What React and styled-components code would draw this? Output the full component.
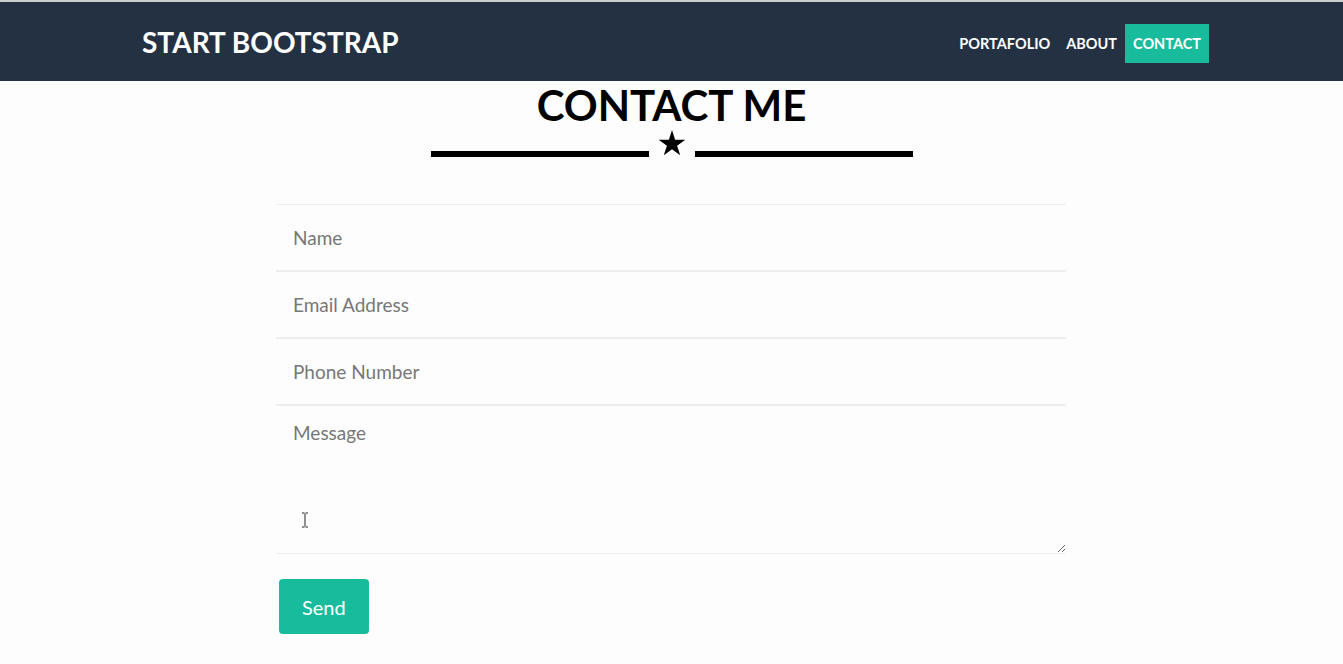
import * as React from "react";
import styled, { createGlobalStyle } from "styled-components";

const GlobalStyle = createGlobalStyle`
  html, body {
    margin: 0;
    padding: 0;
    background: #fdfdfd;
    font-family: Lato, "Liberation Sans", sans-serif;
  }
  * { box-sizing: border-box; }
`;

const Page = styled.div`
  border-top: 2px solid #cdcdcd;
  min-height: 664px;
`;

const NavBar = styled.nav`
  height: 79px;
  background-color: #243142;
  display: flex;
  align-items: center;
  justify-content: space-between;
  padding: 0 134px 0 142px;
`;

const Brand = styled.a`
  color: #fff;
  font-weight: 700;
  font-size: 28px;
  line-height: 1;
  text-decoration: none;
`;

const NavLinks = styled.ul`
  display: flex;
  list-style: none;
  margin: 0;
  padding: 0;
  margin-top: 3px;
`;

const NavLink = styled.li`
  height: 39px;
  display: flex;
  align-items: center;
  padding: 0 8px;
  color: #fff;
  font-weight: 700;
  font-size: 14.5px;
  background-color: ${({ $active }) => ($active ? "#18bc9c" : "transparent")};
`;

const Section = styled.section`
  display: flex;
  flex-direction: column;
  align-items: center;
`;

const Title = styled.h2`
  margin: 3px 0 0;
  font-size: 42px;
  line-height: 1;
  font-weight: 700;
  color: #000;
`;

const Divider = styled.div`
  display: flex;
  align-items: flex-end;
  margin-top: 4px;

  .line {
    width: 218px;
    height: 6px;
    background: #000;
  }

  svg {
    margin: 0 9px 1px;
    width: 28px;
    height: 26px;
  }
`;

const Form = styled.form`
  width: 790px;
  margin: 47px 1px 0 0;
`;

const Group = styled.div`
  position: relative;
  border-top: 1px solid #eee;
  border-bottom: 1px solid #eee;
`;

const Input = styled.input`
  display: block;
  width: 100%;
  height: 65px;
  padding: 0 17px;
  border: none;
  background: transparent;
  font-family: Lato, "Liberation Sans", sans-serif;
  font-size: 19px;
  color: #333;
  outline: none;

  &::placeholder { color: #777; }
`;

const TextArea = styled.textarea`
  display: block;
  width: 100%;
  height: 147px;
  padding: 13px 17px;
  border: none;
  background: transparent;
  font-family: Lato, "Liberation Sans", sans-serif;
  font-size: 19px;
  line-height: 1.42857;
  color: #333;
  outline: none;

  &::placeholder { color: #777; }
`;

const Cursor = styled.svg`
  position: absolute;
  left: 25px;
  top: 106px;
  width: 8px;
  height: 16px;
  pointer-events: none;
`;

const SendButton = styled.button`
  margin: 25px 0 0 3px;
  padding: 0 23px;
  height: 55px;
  border: none;
  border-radius: 4px;
  background-color: #18bc9c;
  color: #fff;
  font-family: Lato, "Liberation Sans", sans-serif;
  font-size: 20px;
`;

const fields = ["Name", "Email Address", "Phone Number"];

const App = () => {
  return (
    <Page>
      <GlobalStyle />
      <NavBar>
        <Brand href="#">START BOOTSTRAP</Brand>
        <NavLinks>
          <NavLink>PORTAFOLIO</NavLink>
          <NavLink>ABOUT</NavLink>
          <NavLink $active>CONTACT</NavLink>
        </NavLinks>
      </NavBar>
      <Section>
        <Title>CONTACT ME</Title>
        <Divider>
          <div className="line" />
          <svg viewBox="0 0 28 26">
            <polygon
              fill="#000"
              points="14,0 17.14,9.67 27.3,9.67 19.08,15.65 22.23,25.33 14,19.35 5.77,25.33 8.92,15.65 0.69,9.67 10.86,9.67"
            />
          </svg>
          <div className="line" />
        </Divider>
        <Form onSubmit={(e) => e.preventDefault()}>
          {fields.map((f) => (
            <Group key={f}>
              <Input placeholder={f} />
            </Group>
          ))}
          <Group>
            <TextArea placeholder="Message" />
            <Cursor viewBox="0 0 8 16">
              <path
                d="M1 1h2.5M4.5 1H7M4 1.5v13M1 15h2.5M4.5 15H7"
                stroke="#222"
                strokeWidth="1"
                fill="none"
              />
            </Cursor>
          </Group>
          <SendButton type="submit">Send</SendButton>
        </Form>
      </Section>
    </Page>
  );
};

export default App;
